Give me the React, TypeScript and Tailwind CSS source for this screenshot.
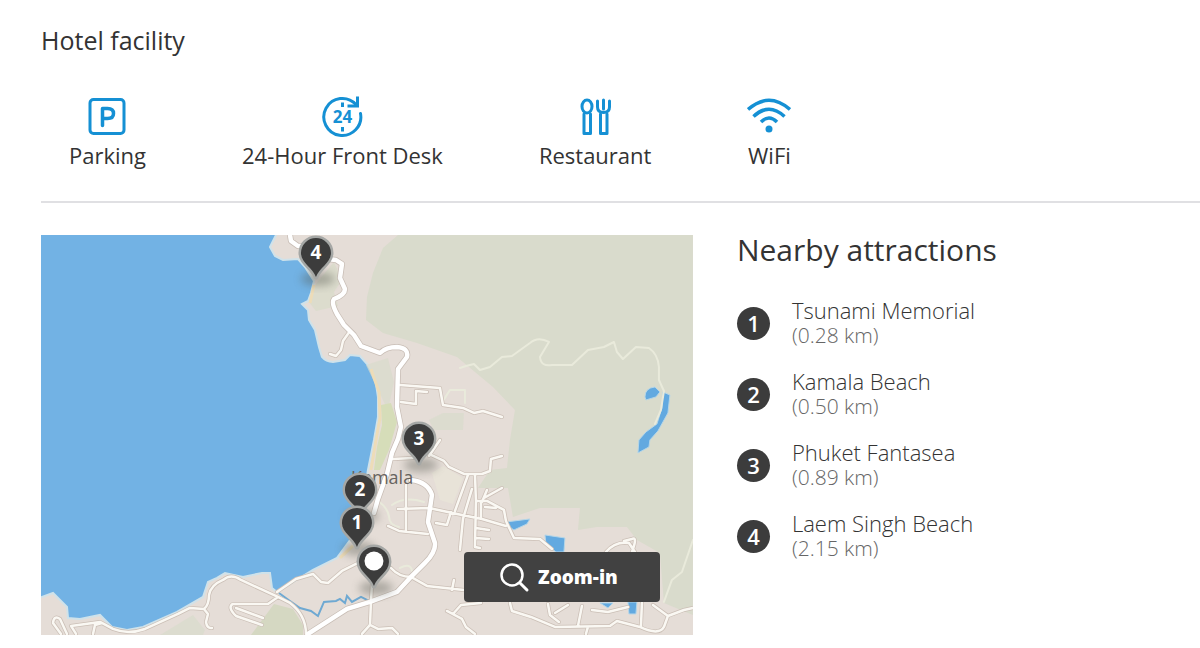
import type { ReactNode } from 'react'

const facilities: { label: string; icon: ReactNode }[] = [
  { label: 'Parking', icon: <ParkingIcon /> },
  { label: '24-Hour Front Desk', icon: <FrontDeskIcon /> },
  { label: 'Restaurant', icon: <RestaurantIcon /> },
  { label: 'WiFi', icon: <WifiIcon /> },
]

const attractions = [
  { name: 'Tsunami Memorial', distance: '0.28 km' },
  { name: 'Kamala Beach', distance: '0.50 km' },
  { name: 'Phuket Fantasea', distance: '0.89 km' },
  { name: 'Laem Singh Beach', distance: '2.15 km' },
]

// Map coordinates, drawn back to front
const pins = [
  { x: 316, y: 253, label: '4' },
  { x: 419, y: 439, label: '3' },
  { x: 360, y: 490, label: '2' },
  { x: 357, y: 523, label: '1' },
  { x: 374, y: 562, label: '' },
]

const mainRoads = [
  'M290 235 L291 241 L298 246 L304 246 M328 259 L336 260 L342 264 L340 278 L345 289 Q345 295 334 299 Q331 303 337 314 L344 325 L354 335 L361 346 L380 353 Q386 347 397 347 Q409 348 407 357 L398 369 L397 407 L401 427 L398 439 L392 453 L387 474 L378 499 L374 513',
  'M411 480 Q428 482 432 495 L428 522 L435 543 Q436 552 425 563 L410 578 L397 592 L370 602 L347 609 L308 634',
]

const roads = [
  'M350 331 L343 341 L341 350 L336 356 L330 354',
  'M400 385 L440 388 L443 405 L463 408 L474 413 L483 411 L502 417',
  'M401 402 L416 404 L416 391 L427 392',
  'M393 459 L413 458 M429 456 L440 440 M431 455 L444 461 L449 467 L464 474 L482 474 L490 471 L491 459 L502 456',
  'M475 474 L476 501 L487 501 L504 510 L506 521 L514 538 L540 539 L552 549',
  'M398 509 L429 508 L462 515 L482 519 L506 526 M406 485 L406 530 M388 526 L399 531 L428 534',
  'M468 475 L455 511 M472 489 L463 519 L460 550 M476 501 L475 547 L480 548 M476 528 L489 530 M476 538 L489 539 M451 512 L447 525 L436 523',
  'M484 498 L502 488 M485 507 L496 508 M481 501 L481 517 M487 490 L482 502',
  'M391 568 Q399 577 411 577 L427 586 L464 590 M452 590 L454 580',
  'M277 592 L296 579 L313 574 L321 582 L328 583 L342 571 L360 562',
  'M61 634 L53 623 Q54 615 60 619 L67 634 M76 634 L71 626 L100 622 L113 629 Q128 635 145 629 L178 614 L190 608 L204 609 Q209 605 209 595 Q211 585 223 580 Q231 573 241 580 L278 597 L290 603 Q306 615 306 634',
  'M204 609 L208 614 L206 622 Q207 629 212 628 M93 634 L95 625 L102 623',
  'M278 597 L268 604 L233 604 Q227 607 236 616 L262 625',
  'M236 608 L263 618',
  'M372 584 L371 602 L370 625 L378 629 L392 628 L398 634 M370 625 L362 634',
  'M447 611 L462 619 L466 627 L475 634 M453 614 L461 605 L481 603',
  'M510 603 L512 611 L531 617 L555 627 L610 626 L617 621 L640 627 Q659 636 664 627 L668 616 L684 610 L693 608 M668 616 L653 605 M642 603 L641 626 M588 627 L586 634',
  'M548 604 L550 615 L559 622 M555 613 L568 605 M578 626 L582 606 M592 610 L608 612 L628 607',
  'M606 552 Q615 541 629 543 L635 552 M632 552 Q638 536 632 539 L624 541',
]

const paths = [
  'M460 368 L466 366 L474 364 L480 370 L490 367 L502 357 L512 356 L530 343 Q538 336 549 342 L540 357 Q541 367 552 365 L572 365 L588 350 L604 347 L614 342 L617 352 L623 359 L636 347 L649 348 Q658 354 659 367 L659 380 L664 391 L661 410 L655 424',
  'M465 390 L450 390 L443 401 M465 390 L465 403',
  'M693 540 L682 572 L672 580 L664 602',
  'M378 501 Q387 507 389 516 Q389 525 399 527 M392 505 Q404 496 424 502 M400 568 Q414 561 412 577',
]

function ParkingIcon() {
  return (
    <svg className="h-11 w-11" viewBox="0 0 44 44" fill="none" stroke="currentColor" strokeWidth="3" aria-hidden="true">
      <rect x="4" y="3.500" width="34" height="34" rx="3.500" />
      <path strokeWidth="3.500" strokeLinecap="round" strokeLinejoin="round" d="M16.500 29.500 V12.500 H21.500 Q27.500 12.500 27.500 17.500 Q27.500 22.500 21.500 22.500 H17" />
    </svg>
  )
}

function FrontDeskIcon() {
  return (
    <svg className="h-11 w-11" viewBox="0 0 44 44" fill="none" stroke="currentColor" strokeWidth="3" aria-hidden="true">
      <path strokeLinecap="round" d="M40.500 17.500 A18.500 18.500 0 1 1 36 8.500" />
      <path d="M27.500 10 H37.500 V0.500" />
      <path d="M22.500 6.500 V11 M22.500 31 V35.500" />
      <text x="22.500" y="27" textAnchor="middle" fill="currentColor" stroke="none" className="font-['Open_Sans',sans-serif] text-[17px] font-bold">
        24
      </text>
    </svg>
  )
}

function RestaurantIcon() {
  return (
    <svg className="h-11 w-11" viewBox="0 0 44 44" fill="none" stroke="currentColor" strokeWidth="3" strokeLinecap="round" strokeLinejoin="round" aria-hidden="true">
      <ellipse cx="14" cy="10.500" rx="5" ry="6.500" />
      <path d="M11 18 V37.500 H17.500 V18" />
      <path d="M24.500 5 V11 Q24.500 16.500 30.500 16.500 Q36.500 16.500 36.500 11 V5 M30.500 4 V13" />
      <path d="M27.500 18 V37.500 H34 V18" />
    </svg>
  )
}

function WifiIcon() {
  return (
    <svg className="h-11 w-11" viewBox="0 0 44 44" fill="none" stroke="currentColor" strokeWidth="3.500" aria-hidden="true">
      <path d="M1 13.500 Q22 -5 43 13.500 M6.500 20.500 Q22 6 37.500 20.500 M14 26 Q22 18 30 26" />
      <circle cx="22" cy="33" r="3.500" fill="currentColor" stroke="none" />
    </svg>
  )
}

function Pin({ x, y, label }: { x: number; y: number; label: string }) {
  const shape = 'M0 24 C-3 15 -15 10 -15 0 A15 15 0 0 1 15 0 C15 10 3 15 0 24 Z'
  return (
    <g transform={`translate(${x} ${y})`}>
      <ellipse cx="2" cy="26" rx="17" ry="7" fill="#55584f" opacity="0.4" filter="url(#soft)" />
      <path d={shape} fill="#3c3c3c" stroke="#a5a7a5" strokeWidth="5" strokeLinejoin="round" />
      <path d={shape} fill="#3c3c3c" />
      {label ? (
        <text y="6" textAnchor="middle" fill="#fff" className="font-['Open_Sans',sans-serif] text-[19px] font-bold">
          {label}
        </text>
      ) : (
        <circle cy="-1" r="9.500" fill="#fff" />
      )}
    </g>
  )
}

function AreaMap() {
  return (
    <svg viewBox="41 235 652 400" className="block h-auto w-full" role="img" aria-label="Map of Kamala">
      <defs>
        <filter id="soft" x="-50%" y="-50%" width="200%" height="200%">
          <feGaussianBlur stdDeviation="4" />
        </filter>
      </defs>
      <rect x="41" y="235" width="652" height="400" fill="#72b2e4" />

      {/* Land */}
      <path
        fill="#e5ddd7"
        stroke="#cfe2ea"
        strokeWidth="2"
        d="M277 233 L270 247 L275 256 L283 260 L298 259 L305 267 L314 281 L311 293 L308 301 L302 304 L308 310 L309 320 L315 330 L319 347 L322 357 Q326 362 333 362 L345 360 L350 355 L360 356 L368 365 L375 377 L378 397 L378 417 L374 440 L368 470 L363 500 L354 535 L337 558 L313 570 L277 592 L272 588 L270 573 L262 573 L243 577 L225 573 L217 578 L208 582 L203 597 L177 612 L143 627 L127 630 L112 627 L100 615 L80 619 L68 618 L67 607 L53 593 L39 598 V637 H695 V233 Z"
      />

      {/* Hills and parks */}
      <g fill="#d9dbcc">
        <path d="M398 235 L383 248 L373 273 L367 297 L366 320 L383 333 L417 343 L457 357 L493 387 L515 410 L510 440 L507 468 L490 470 L478 488 L508 488 L513 517 L540 508 H580 L578 530 L597 527 H627 L637 540 L660 553 L664 603 L693 615 V235 Z" />
        <path d="M316 284 L334 262 L342 280 L334 292 L338 306 L316 311 L309 302 Z" fill="#dcdccd" />
        <path d="M429 420 L443 413 L464 413 L463 430 L434 430 Z" opacity="0.7" />
        <path d="M366 365 L388 358 L394 382 L388 410 L383 400 Z" opacity="0.7" />
        <path d="M251 635 L274 604 L293 609 L303 625 L303 635 Z" fill="#d5d8c2" />
        <path d="M160 635 L193 615 L205 630 L203 635 Z" opacity="0.7" />
      </g>
      <path fill="#d6ddb9" d="M381 405 L391 403 L397 422 L389 450 L380 470 L374 470 L377 447 L382 425 Z" />
      <path fill="#e8e3d8" d="M432 473 L443 466 L463 478 L453 504 L440 500 Z" />
      <path fill="none" stroke="#eddcb8" strokeWidth="3" d="M314 285 L310 303 M371 369 L379 392 L380 418 L376 440 L371 470 M353 546 L340 558" />

      {/* Water inside the island */}
      <g fill="#62a9e0" stroke="#b5d6e8" strokeWidth="1">
        <path d="M645 397 Q645 388 655 387 L660 392 L656 397 L646 400 Z" />
        <path d="M663 392 L670 395 L668 413 L658 431 L650 440 L649 447 L638 453 L639 440 L646 432 L657 424 L662 408 Z" />
        <path d="M506 522 L530 519 L527 524 L514 530 L511 528 Z" />
        <path d="M545 535 L565 538 L564 552 H556 L546 544 Z" />
        <path d="M600 603 H613 L608 608 Z M628 602 H637 L636 614 L629 614 Z" />
      </g>
      <path fill="none" stroke="#6fa9d2" strokeWidth="2" d="M279 593 L290 601 L300 608 L311 611 L318 616 L324 602 L336 601 L340 599 L345 603 L347 596 L352 602 L361 597 L371 602" />

      <g fill="none" strokeLinecap="round" strokeLinejoin="round">
        <path d={paths.join(' ')} stroke="#e9eadb" strokeWidth="2" />
        <path d={roads.join(' ')} stroke="#cbbfb6" strokeWidth="4" />
        <path d={mainRoads.join(' ')} stroke="#c8bdb5" strokeWidth="6" />
        <path d={roads.join(' ')} stroke="#faf8f3" strokeWidth="2.500" />
        <path d={mainRoads.join(' ')} stroke="#fff" strokeWidth="4.500" />
      </g>

      <text x="351" y="484" fill="#67635f" className="font-['Open_Sans',sans-serif] text-[18px]">
        Kamala
      </text>

      {pins.map((pin) => (
        <Pin key={pin.y} {...pin} />
      ))}
    </svg>
  )
}

export default function App() {
  return (
    <main className="bg-white pt-6 pl-[41px] font-['Open_Sans','Noto_Sans',sans-serif] text-[#333]">
      <section className="border-b-2 border-[#e0e0e3] pb-[31px]">
        <h2 className="text-[25px] leading-8">Hotel facility</h2>
        <ul className="mt-10 flex flex-wrap gap-x-24 gap-y-6 pl-7">
          {facilities.map(({ label, icon }) => (
            <li key={label} className="flex flex-col items-center text-[22px] leading-[30px]">
              <span className="text-[#1590d4]">{icon}</span>
              {label}
            </li>
          ))}
        </ul>
      </section>

      <section className="mt-8 flex items-start gap-11">
        <div className="relative w-9/16 shrink-0">
          <AreaMap />
          <button
            type="button"
            className="absolute right-[33px] bottom-[33px] flex h-[50px] w-[196px] items-center justify-center gap-2 rounded bg-[#414141] pr-2 text-[19px] font-extrabold text-white"
          >
            <svg className="h-8 w-8" viewBox="0 0 32 32" fill="none" stroke="currentColor" strokeWidth="2.500" strokeLinecap="round" aria-hidden="true">
              <circle cx="14" cy="14" r="10.500" />
              <path strokeWidth="3" d="M22 22 L29 29" />
            </svg>
            Zoom-in
          </button>
        </div>

        <div className="min-w-0 flex-1">
          <h2 className="text-[30px] leading-[30px]">Nearby attractions</h2>
          <ol className="mt-[33px] flex flex-col gap-[21px]">
            {attractions.map(({ name, distance }, i) => (
              <li key={name} className="flex items-center gap-[22px]">
                <span className="flex h-[33px] w-[33px] shrink-0 items-center justify-center rounded-full bg-[#3c3c3c] text-[22px] leading-8 font-semibold text-white">
                  {i + 1}
                </span>
                <div className="leading-[25px] font-light">
                  <p className="text-[22px]">{name}</p>
                  <p className="text-[21px] text-[#666]">({distance})</p>
                </div>
              </li>
            ))}
          </ol>
        </div>
      </section>
    </main>
  )
}
